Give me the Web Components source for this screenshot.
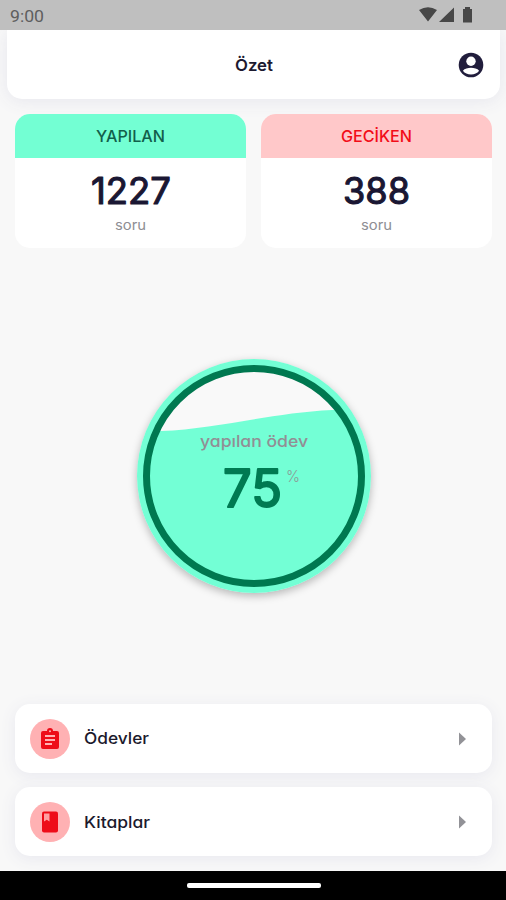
<!DOCTYPE html>
<html lang="tr"><head><meta charset="utf-8"><title>Özet</title>
<style>html,body{margin:0;height:100%;overflow:hidden}body{font-family:Inter,"Noto Sans",sans-serif}</style></head>
<body>
<summary-app></summary-app>
<script>
const define=(name,html)=>customElements.define(name,class extends HTMLElement{
  constructor(){super();this.attachShadow({mode:'open'}).innerHTML=html;}
});

/* Text run fitted to a given width, with softly rounded strokes. */
customElements.define('fit-text',class extends HTMLElement{
  connectedCallback(){
    const a=(n,d)=>this.getAttribute(n)||d, w=a('w'), s=+a('size',16), h=Math.round(s*.74);
    this.attachShadow({mode:'open'}).innerHTML=`<style>:host{display:block;flex:none;width:${w}px;height:${h}px}
      svg{display:block;overflow:visible}
      text{font-family:${a('font','Inter')},"Noto Sans",sans-serif;font-feature-settings:"cv11";fill:currentColor;stroke:currentColor;stroke-linejoin:round}</style>
      <svg width="${w}" height="${h}"><text x="0" y="${h-a('rise',0)}" font-size="${s}" font-weight="${a('weight',500)}" stroke-width="${a('stroke',0)}" textLength="${w}" lengthAdjust="${a('adjust','spacingAndGlyphs')}">${a('text','')}</text></svg>`;
  }
});

define('status-bar',`<style>:host{display:flex;box-sizing:border-box;height:30px;background:#bfbfbf;padding:0 33px 0 10px;align-items:center;justify-content:space-between;color:#5e5e5e;position:relative;z-index:1}
svg{display:block}</style>
<fit-text text="9:00" w="34" size="17" weight="400" font="Roboto"></fit-text>
<svg width="54" height="18" fill="#474747"><path d="M0 4Q9-1.5 18 4L9 15.5ZM20 16 35 1.5V16ZM44 3h2V1h5v2h2v13.5h-9Z"/></svg>`);

define('app-header',`<style>:host{display:grid;grid-template-columns:1fr auto 1fr;align-items:center;box-sizing:border-box;height:69px;margin:0 6px 0 7px;padding:0 16px 0 0;background:#fff;border-radius:0 0 15px 15px;box-shadow:0 2px 18px #e6e6ed;color:#1c1a30}
svg{justify-self:end}fit-text{grid-column:2;margin-left:17px}</style>
<fit-text text="Özet" w="38" size="16.5" weight="600"></fit-text>
<svg width="26" height="26" viewBox="0 0 26 26"><circle cx="13" cy="13" r="12.3" fill="#211d3c"/><circle cx="13" cy="9.2" r="4.7" fill="#fff"/><path d="M4.9 18.8C6.6 16.5 10 15.8 13 15.8s6.4.7 8.1 3C19.2 21.3 16.5 22.6 13 22.6S6.8 21.3 4.9 18.8Z" fill="#fff"/></svg>`);

define('stat-card',`<style>:host{display:flex;flex-direction:column;height:134px;background:#fff;border-radius:15px;overflow:hidden}
header{height:44px;display:flex;align-items:center;justify-content:center;background:var(--tone);color:var(--ink)}
main{flex:1;display:flex;flex-direction:column;align-items:center;padding-top:20px;gap:15px;color:#1a1733}
footer{color:#8e8e93}</style><header><slot name="label"></slot></header><main><slot name="value"></slot><footer><fit-text text="soru" w="31" size="13.5" weight="400"></fit-text></footer></main>`);

define('progress-gauge',`<style>:host{display:grid;width:234px;height:234px;border-radius:50%;box-shadow:0 3px 9px #0004}
svg,div{grid-area:1/1}svg{display:block}
div{display:flex;flex-direction:column;align-items:center;padding-top:76px;gap:21px;color:#928e94}
section{display:flex;align-items:flex-start;gap:4px;padding-left:15px;color:#007a52}
.unit{color:#8c9a96}</style>
<svg width="234" height="234"><defs><clipPath id="disc"><circle cx="117" cy="117" r="107"/></clipPath></defs><circle cx="117" cy="117" r="117" fill="#73ffd5"/>
<path clip-path="url(#disc)" d="M0 73L24 72C80 70 133 54 195 51L234 50V0H0Z" fill="#f9f9f9"/><circle cx="117" cy="117" r="107.5" fill="none" stroke="#007850" stroke-width="7"/></svg>
<div><fit-text text="yapılan ödev" w="108" size="16.5" weight="450"></fit-text>
<section><fit-text text="75" w="59" size="51.5" weight="400" stroke="2" rise="-.5"></fit-text><fit-text class="unit" text="%" w="14" size="16" weight="300" rise="-2"></fit-text></section></div>`);

define('menu-row',`<style>:host{display:flex;align-items:center;box-sizing:border-box;height:69px;padding:0 25px 0 15px;background:#fff;border-radius:15px;box-shadow:0 3px 16px #e8e8ef;color:#1c1a2d}
.icon{display:grid;place-items:center;width:40px;height:40px;border-radius:50%;background:#ffb1b3;margin-right:14px}
.arrow{margin-left:auto}</style>
<span class="icon"><slot name="icon"></slot></span><slot></slot><svg class="arrow" width="8" height="14"><path d="M0 .5 7 7 0 13.5Z" fill="#929297"/></svg>`);

define('nav-bar',`<style>:host{display:flex;justify-content:center;height:29px;background:#000;box-sizing:border-box;padding:12px 0 0 1px;position:relative;z-index:1}
i{width:134px;height:5px;border-radius:2px;background:#fff}</style><i></i>`);

define('summary-app',`<style>:host{display:flex;flex-direction:column;height:900px;width:506px;background:#f8f8f8;overflow:hidden}
.stats{display:grid;grid-template-columns:1fr 1fr;gap:15px;padding:15px 14px 0 15px}
.middle{flex:1;display:flex;justify-content:center;align-items:center;padding-left:1px}
.menu{display:flex;flex-direction:column;gap:14px;padding:0 14px 15px 15px}
svg{display:block}.done{--tone:#73ffd3;--ink:#125f4b}.late{--tone:#ffc8c9;--ink:#f20d18}</style>
<status-bar></status-bar><app-header></app-header>
<div class="stats">
<stat-card class="done"><fit-text slot="label" text="YAPILAN" w="69" size="16" weight="450"></fit-text><fit-text slot="value" text="1227" w="80" size="37" weight="400" stroke="1.1" rise="1"></fit-text></stat-card>
<stat-card class="late"><fit-text slot="label" text="GECİKEN" w="71" size="16" weight="500"></fit-text><fit-text slot="value" text="388" w="67" size="37" weight="400" stroke="1.1" rise="1"></fit-text></stat-card>
</div>
<div class="middle"><progress-gauge></progress-gauge></div>
<div class="menu">
<menu-row><svg slot="icon" width="20" height="22"><path fill="#ee0c18" d="M3 3H7a3 3 0 0 1 6 0h4a2 2 0 0 1 2 2V19a2 2 0 0 1-2 2H3a2 2 0 0 1-2-2V5a2 2 0 0 1 2-2Z"/><circle cx="10" cy="3.3" r="1" fill="#ffb1b3"/><path d="M5 8h10M5 12h10M5 16h7" stroke="#ffb1b3" stroke-width="1.8"/></svg><fit-text text="Ödevler" w="65" size="16" weight="450" rise="1"></fit-text></menu-row>
<menu-row><svg slot="icon" width="18" height="22"><rect x="1" y="0.5" width="16" height="21" rx="2" fill="#ee0c18"/><path d="M3 2.5H8.5V10.5L5.8 8.8 3 10.5Z" fill="#ffa0a2"/></svg><fit-text text="Kitaplar" w="66" size="16" weight="450"></fit-text></menu-row>
</div><nav-bar></nav-bar>`);
</script></body></html>
